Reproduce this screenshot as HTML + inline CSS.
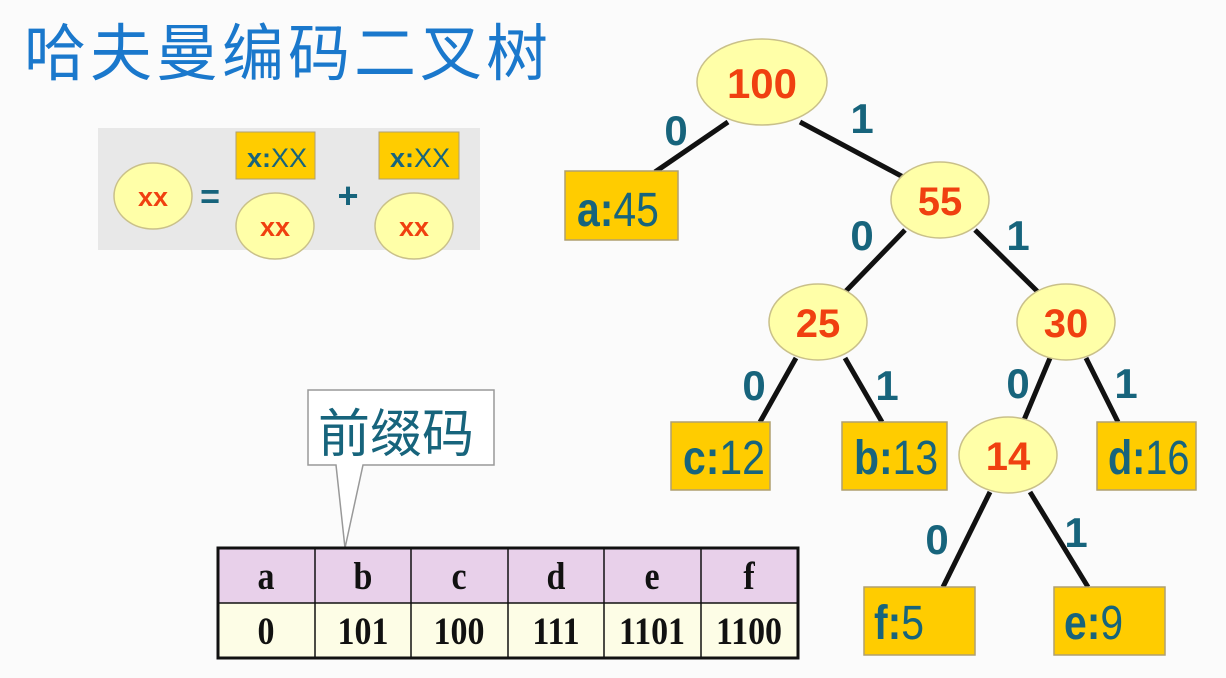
<!DOCTYPE html>
<html><head><meta charset="utf-8"><style>
html,body{margin:0;padding:0;background:#fbfbfb;}
svg{display:block}
.t{font-family:"Liberation Sans","Noto Sans CJK SC",sans-serif;}
.num{font-family:"Liberation Sans",sans-serif;font-weight:bold;fill:#f04010;text-anchor:middle;}
.bit{font-family:"Liberation Sans",sans-serif;font-weight:bold;fill:#17647c;text-anchor:middle;}
.lf{font-family:"Liberation Sans",sans-serif;fill:#17647c;}
.tb{font-family:"Liberation Serif",serif;font-weight:bold;fill:#111;text-anchor:middle;}
</style></head><body>
<svg width="1226" height="678" viewBox="0 0 1226 678" xmlns="http://www.w3.org/2000/svg">
<rect width="1226" height="678" fill="#fbfbfb"/>
<text x="24" y="75" class="t" style="font-size:62px" fill="#1a78cc" letter-spacing="4">哈夫曼编码二叉树</text>

<!-- formula -->
<rect x="98" y="128" width="382" height="122" fill="#e8e8e8"/>
<g stroke="#c9c08a" stroke-width="1.5" fill="#ffffa8">
<ellipse cx="153" cy="196" rx="39" ry="33"/>
<ellipse cx="275" cy="226" rx="39" ry="33"/>
<ellipse cx="414" cy="226" rx="39" ry="33"/>
</g>
<rect x="236" y="132" width="79" height="47" fill="#ffcc00" stroke="#b0a070"/>
<rect x="379" y="132" width="80" height="47" fill="#ffcc00" stroke="#b0a070"/>
<text x="153" y="206" class="num" style="font-size:27px">xx</text>
<text x="275" y="236" class="num" style="font-size:27px">xx</text>
<text x="414" y="236" class="num" style="font-size:27px">xx</text>
<text x="247" y="167" class="lf" style="font-size:27px"><tspan font-weight="bold">x:</tspan>XX</text>
<text x="390" y="167" class="lf" style="font-size:27px"><tspan font-weight="bold">x:</tspan>XX</text>
<text x="210" y="208" class="bit" style="font-size:34px">=</text>
<text x="348" y="208" class="bit" style="font-size:36px">+</text>

<!-- edges -->
<g stroke="#111" stroke-width="5">
<line x1="728" y1="122" x2="655" y2="172"/>
<line x1="800" y1="122" x2="905" y2="178"/>
<line x1="905" y1="230" x2="845" y2="292"/>
<line x1="975" y1="230" x2="1038" y2="292"/>
<line x1="796" y1="358" x2="760" y2="422"/>
<line x1="845" y1="358" x2="882" y2="422"/>
<line x1="1050" y1="358" x2="1024" y2="420"/>
<line x1="1086" y1="358" x2="1118" y2="422"/>
<line x1="990" y1="492" x2="943" y2="587"/>
<line x1="1030" y1="492" x2="1088" y2="587"/>
</g>

<g stroke="#c9c08a" stroke-width="1.5" fill="#ffffa8">
<ellipse cx="762" cy="82" rx="65" ry="43"/>
<ellipse cx="940" cy="200" rx="49" ry="38"/>
<ellipse cx="818" cy="322" rx="49" ry="38"/>
<ellipse cx="1066" cy="322" rx="49" ry="38"/>
<ellipse cx="1008" cy="455" rx="49" ry="38"/>
</g>
<text x="762" y="98" class="num" style="font-size:42px">100</text>
<text x="940" y="215" class="num" style="font-size:40px">55</text>
<text x="818" y="337" class="num" style="font-size:40px">25</text>
<text x="1066" y="337" class="num" style="font-size:40px">30</text>
<text x="1008" y="470" class="num" style="font-size:40px">14</text>

<g style="font-size:42px">
<text x="676" y="145" class="bit">0</text>
<text x="862" y="133" class="bit">1</text>
<text x="862" y="250" class="bit">0</text>
<text x="1018" y="250" class="bit">1</text>
<text x="754" y="400" class="bit">0</text>
<text x="887" y="400" class="bit">1</text>
<text x="1018" y="398" class="bit">0</text>
<text x="1126" y="398" class="bit">1</text>
<text x="937" y="554" class="bit">0</text>
<text x="1076" y="547" class="bit">1</text>
</g>

<g fill="#ffcc00" stroke="#b0a070" stroke-width="1.5">
<rect x="565" y="171" width="113" height="69"/>
<rect x="671" y="422" width="99" height="68"/>
<rect x="842" y="422" width="105" height="68"/>
<rect x="1097" y="422" width="99" height="68"/>
<rect x="864" y="587" width="111" height="68"/>
<rect x="1054" y="587" width="111" height="68"/>
</g>
<g style="font-size:44px">
<text class="lf" transform="translate(577,226) scale(0.93,1.1)"><tspan font-weight="bold">a:</tspan>45</text>
<text class="lf" transform="translate(683,474) scale(0.93,1.1)"><tspan font-weight="bold">c:</tspan>12</text>
<text class="lf" transform="translate(854,474) scale(0.93,1.1)"><tspan font-weight="bold">b:</tspan>13</text>
<text class="lf" transform="translate(1108,474) scale(0.9,1.1)"><tspan font-weight="bold">d:</tspan>16</text>
<text class="lf" transform="translate(874,639) scale(0.93,1.1)"><tspan font-weight="bold">f:</tspan>5</text>
<text class="lf" transform="translate(1064,639) scale(0.93,1.1)"><tspan font-weight="bold">e:</tspan>9</text>
</g>

<!-- callout -->
<path d="M308 390 H494 V465 H363 L345 548 L336 465 H308 Z" fill="#fff" stroke="#999" stroke-width="1.5"/>
<text x="318" y="452" class="t" style="font-size:52px" fill="#17647c">前缀码</text>

<!-- table -->
<rect x="218" y="548" width="580" height="55" fill="#e8d0ea"/>
<rect x="218" y="603" width="580" height="55" fill="#fdfde6"/>
<g stroke="#111" stroke-width="1.5">
<line x1="218" y1="603" x2="798" y2="603"/>
<line x1="315" y1="548" x2="315" y2="658"/>
<line x1="411" y1="548" x2="411" y2="658"/>
<line x1="508" y1="548" x2="508" y2="658"/>
<line x1="604" y1="548" x2="604" y2="658"/>
<line x1="701" y1="548" x2="701" y2="658"/>
</g>
<rect x="218" y="548" width="580" height="110" fill="none" stroke="#111" stroke-width="3"/>
<g style="font-size:34px">
<text class="tb" transform="translate(266,589) scale(1,1.15)">a</text>
<text class="tb" transform="translate(363,589) scale(1,1.15)">b</text>
<text class="tb" transform="translate(459,589) scale(1,1.15)">c</text>
<text class="tb" transform="translate(556,589) scale(1,1.15)">d</text>
<text class="tb" transform="translate(652,589) scale(1,1.15)">e</text>
<text class="tb" transform="translate(749,589) scale(1,1.15)">f</text>
<text class="tb" transform="translate(266,644) scale(1,1.15)">0</text>
<text class="tb" transform="translate(363,644) scale(1,1.15)">101</text>
<text class="tb" transform="translate(459,644) scale(1,1.15)">100</text>
<text class="tb" transform="translate(556,644) scale(1,1.15)">111</text>
<text class="tb" transform="translate(652,644) scale(1,1.15)">1101</text>
<text class="tb" transform="translate(749,644) scale(1,1.15)">1100</text>
</g>
</svg>
</body></html>
